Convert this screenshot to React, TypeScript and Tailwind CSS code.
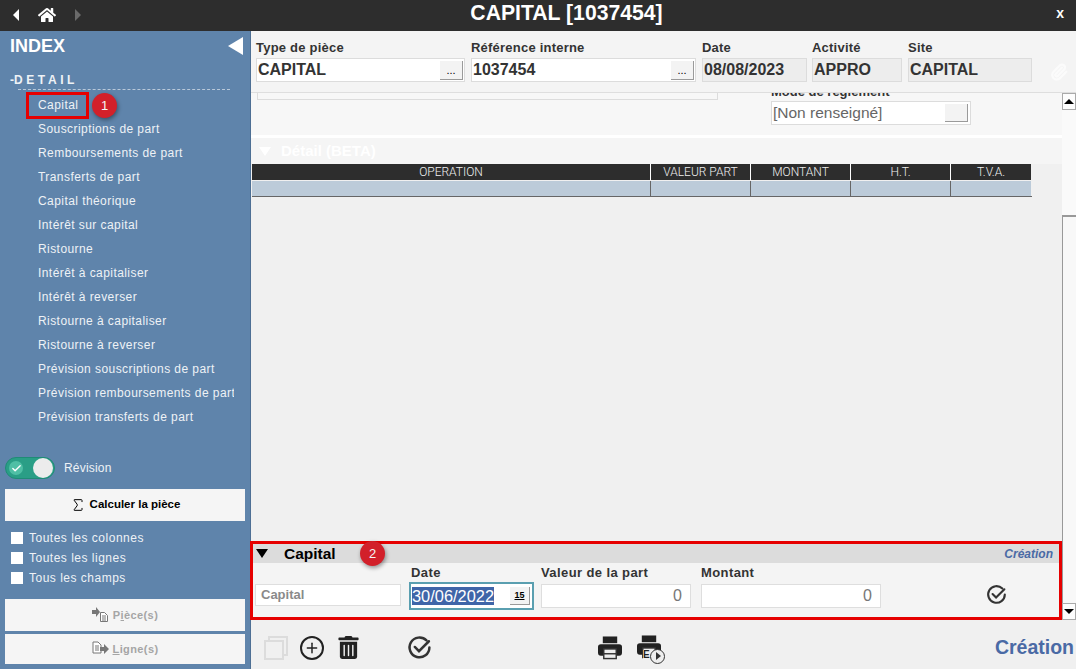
import React from "react";
import { FaHome, FaTrashAlt } from "react-icons/fa";
import { Check, Paperclip, Plus, Sigma } from "lucide-react";

const menu = [
  "Capital",
  "Souscriptions de part",
  "Remboursements de part",
  "Transferts de part",
  "Capital théorique",
  "Intérêt sur capital",
  "Ristourne",
  "Intérêt à capitaliser",
  "Intérêt à reverser",
  "Ristourne à capitaliser",
  "Ristourne à reverser",
  "Prévision souscriptions de part",
  "Prévision remboursements de part",
  "Prévision transferts de part",
];

function Badge({ n }: { n: string }) {
  return (
    <div className="absolute w-[25px] h-[25px] rounded-full bg-[#d2202a] text-[#f5f5f5] text-[13px] flex items-center justify-center shadow-[1px_2px_4px_rgba(0,0,0,0.4)]">
      {n}
    </div>
  );
}

function CheckCircle({ size, color }: { size: number; color: string }) {
  return (
    <svg width={size} height={size} viewBox="0 0 24 24" fill="none" stroke={color} strokeWidth="2.4" strokeLinecap="round">
      <path d="M18.700 5.200A9.500 9.500 0 1 0 21.500 12" />
      <path d="M7.500 11.500l4 4L21 6" />
    </svg>
  );
}

function Printer() {
  return (
    <svg width="24" height="24" viewBox="0 0 25 24">
      <rect x="5" y="0" width="15" height="7" fill="#222" />
      <path d="M3 8h19a3 3 0 0 1 3 3v6a3 3 0 0 1-3 3H3a3 3 0 0 1-3-3v-6a3 3 0 0 1 3-3z" fill="#222" />
      <rect x="6" y="13" width="13" height="10" fill="#eee" stroke="#333" strokeWidth="1.500" />
      <path d="M6 18h13" stroke="#333" strokeWidth="1.500" />
    </svg>
  );
}

function DotsButton() {
  return (
    <div className="w-[23px] h-[19px] bg-[#f3f3f3] border-r border-b border-[#9a9a9a] text-[11px] leading-[18px] text-center text-black">
      ...
    </div>
  );
}

function TopField({ label, value, w, readOnly }: { label: string; value: string; w: string; readOnly?: boolean }) {
  return (
    <div className={w}>
      <div className="text-[13px] leading-[15px] font-bold text-[#333] tracking-[0.22px] mb-[3px]">{label}</div>
      <div className={`h-[24px] border border-[#dcdcdc] flex items-center pl-[1px] pr-[1px] ${readOnly ? "bg-[#ededed]" : "bg-white"}`}>
        <span className="flex-1 text-[16px] font-bold text-[#333]">{value}</span>
        {!readOnly && <DotsButton />}
      </div>
    </div>
  );
}

function BottomLabel({ children }: { children: React.ReactNode }) {
  return <div className="text-[13px] leading-[15px] font-bold text-[#333] h-[16px] tracking-[0.4px]">{children}</div>;
}

const cols = [
  { t: "OPERATION", w: "w-[399px]" },
  { t: "VALEUR PART", w: "w-[100px]" },
  { t: "MONTANT", w: "w-[100px]" },
  { t: "H.T.", w: "w-[100px]" },
  { t: "T.V.A.", w: "w-[80px]" },
];

export default function App() {
  return (
    <div className="w-[1076px] h-[669px] flex flex-col overflow-hidden font-['Liberation_Sans',Arial,sans-serif] bg-[#f4f4f4]">
      {/* barre de titre */}
      <div className="h-[31px] shrink-0 bg-[#2d2d2d] flex items-center relative">
        <div className="flex items-center pl-[13px] gap-[18px] absolute left-0 pb-[2px]">
          <div className="w-0 h-0 border-y-[6px] border-y-transparent border-r-[6px] border-r-white" />
          <FaHome className="text-white ml-[1px]" size={18} />
          <div className="w-0 h-0 border-y-[6px] border-y-transparent border-l-[6px] border-l-[#6a6a6a] ml-[1px]" />
        </div>
        <div className="flex-1 text-center text-white font-bold text-[21.200px] pl-[57px] pb-[5px]">CAPITAL [1037454]</div>
        <div className="absolute right-[12px] top-[3px] text-white font-bold text-[14px]">x</div>
      </div>

      <div className="flex flex-1 min-h-0">
        {/* index */}
        <div className="w-[250px] shrink-0 bg-[#5f84ab] border-r border-[#4d6f94] box-content flex flex-col text-[#eef2f6]">
          <div className="flex items-center justify-between pl-[10px] pr-[7px] h-[30px]">
            <span className="text-[18px] font-bold text-white">INDEX</span>
            <div className="w-0 h-0 border-y-[9px] border-y-transparent border-r-[15px] border-r-white" />
          </div>
          <div className="pl-[10px] mt-[12px] text-[12px] leading-[14px] font-bold">
            -<span className="tracking-[3.6px]">DETAIL</span>
          </div>
          <div className="ml-[18px] mr-[20px] mt-[2px] border-t border-dashed border-[#b9c9da]" />
          <div className="flex flex-col pl-[38px] mt-[3px] w-[234px] overflow-hidden">
            {menu.map((m) => (
              <div key={m} className="h-[24px] leading-[24px] text-[12px] tracking-[0.43px] whitespace-nowrap">
                {m}
              </div>
            ))}
          </div>

          <div className="flex items-center mt-[28px] pl-[5px] h-[22px]">
            <div className="w-[50px] h-[22px] rounded-full bg-[#2a9e86] border border-[#1f8c76] flex items-center justify-between pl-[3px] pr-[1px]">
              <div className="w-[14px] h-[14px] rounded-full bg-[#4fbfa5] flex items-center justify-center">
                <Check size={11} color="white" strokeWidth={3} />
              </div>
              <div className="w-[20px] h-[20px] rounded-full bg-[#ececec]" />
            </div>
            <span className="text-[12px] ml-[9px] tracking-[0.2px]">Révision</span>
          </div>
          <div className="mx-[5px] mt-[10px] h-[32px] bg-[#f5f5f5] flex items-center justify-center gap-[4px] text-[11.500px] font-bold text-black">
            <Sigma size={16} strokeWidth={1.500} />
            <span>Calculer la pièce</span>
          </div>
          <div className="mt-[7px] pl-[11px] flex flex-col">
            {["Toutes les colonnes", "Toutes les lignes", "Tous les champs"].map((c) => (
              <div key={c} className="h-[20px] flex items-center gap-[6px] text-[12px] tracking-[0.5px]">
                <span className="w-[12px] h-[12px] bg-white" />
                {c}
              </div>
            ))}
          </div>
          <div className="mx-[5px] mt-[11px] h-[32px] bg-[#f5f5f5] flex items-center justify-center gap-[4px] text-[11px] font-bold text-[#a5a5a5] tracking-[0.4px]">
            <svg width="17" height="16" viewBox="0 0 17 16">
              <path d="M0 3h4V0l4 5-4 5V7H0z" fill="#777" />
              <path d="M8.500 5.500h4l3 3v6h-7z" fill="#fff" stroke="#777" />
              <path d="M10 9h4M10 11h4M10 13h4" stroke="#777" />
            </svg>
            <span>
              P<u>i</u>èce(s)
            </span>
          </div>
          <div className="mx-[5px] mt-[3px] h-[30px] bg-[#f5f5f5] flex items-center justify-center gap-[4px] text-[11px] font-bold text-[#a5a5a5] tracking-[0.4px]">
            <svg width="17" height="16" viewBox="0 0 17 16">
              <path d="M1 1h5l3 3v8H1z" fill="#fff" stroke="#777" />
              <path d="M3 5h4M3 7h4M3 9h4" stroke="#777" />
              <path d="M8 6h4V3l5 5-5 5v-3H8z" fill="#777" />
            </svg>
            <span>
              <u>L</u>igne(s)
            </span>
          </div>
        </div>

        {/* contenu */}
        <div className="flex-1 min-w-0 flex flex-col">
          <div className="h-[62px] shrink-0 flex pl-[5px] pt-[9px] gap-[6px] bg-[#f4f4f4] border-b border-[#dedede]">
            <TopField label="Type de pièce" value="CAPITAL" w="w-[209px]" />
            <TopField label="Référence interne" value="1037454" w="w-[225px]" />
            <TopField label="Date" value="08/08/2023" w="w-[105px]" readOnly />
            <TopField label="Activité" value="APPRO" w="w-[90px] ml-[-1px]" readOnly />
            <TopField label="Site" value="CAPITAL" w="w-[124px]" readOnly />
            <Paperclip className="ml-[12px] mt-[23px]" size={18} color="#fbfbfb" strokeWidth={3} />
          </div>

          <div className="flex flex-1 min-h-0">
            <div className="w-[811px] shrink-0 flex flex-col">
              <div className="flex-1 min-h-0 bg-[#f0f0f0] overflow-hidden flex flex-col">
                <div className="h-[42px] shrink-0 bg-[#f7f7f7] relative flex">
                  <div className="w-[461px] h-[7px] ml-[6px] border border-t-0 border-[#dcdcdc]" />
                  <div className="ml-[53px]">
                    <div className="h-[8px] overflow-hidden">
                      <div className="text-[13px] font-bold leading-[15px] text-[#333] -mt-[9px]">Mode de règlement</div>
                    </div>
                    <div className="w-[200px] h-[24px] bg-white border border-[#dcdcdc] flex items-center text-[15.500px] text-[#666] pl-[1px] pr-[2px] justify-between">
                      <span>[Non renseigné]</span>
                      <span className="w-[23px] h-[18px] bg-[#f3f3f3] border-r border-b border-[#9a9a9a]" />
                    </div>
                  </div>
                </div>
                <div className="h-[3px] shrink-0 bg-white" />
                <div className="h-[26px] shrink-0 bg-[#f5f5f5] flex items-center pl-[8px] pt-[1px] text-white font-bold text-[15px]">
                  <span className="w-0 h-0 mr-[10px] border-x-[6px] border-x-transparent border-t-[9px] border-t-white" />
                  <span>Détail (BETA)</span>
                </div>
                <div className="ml-[1px] w-[780px] shrink-0">
                  <div className="flex h-[16px]">
                    {cols.map((c) => (
                      <div key={c.t} className={`${c.w} bg-[#2d2d2d] border-r border-white last:border-r-0 text-[#f0f0f0] text-[12px] font-['Roboto',sans-serif] font-light text-center leading-[16px]`}>
                        {c.t}
                      </div>
                    ))}
                  </div>
                  <div className="flex h-[17px] border-b border-[#666] border-t border-t-[#f0f0f0]">
                    {cols.map((c) => (
                      <div key={c.t} className={`${c.w} bg-[#bccbd9] border-r border-[#666] last:border-r-0`} />
                    ))}
                  </div>
                </div>
              </div>

              {/* saisie */}
              <div className="h-[79px] w-[812px] -ml-[1px] shrink-0 border-[3px] border-[#e60000] bg-[#f4f4f4] flex flex-col">
                <div className="h-[19px] bg-[#dcdcdc] flex items-center pl-[3px]">
                  <span className="w-0 h-0 mr-[16px] border-x-[6px] border-x-transparent border-t-[9px] border-t-black" />
                  <span className="text-[15.500px] font-bold text-black">Capital</span>
                  <span className="ml-auto mr-[6px] text-[12px] font-bold italic text-[#4a6aa5]">Création</span>
                </div>
                <div className="flex pl-[2px] pt-[2px]">
                  <div className="w-[146px] pt-[19px]">
                    <div className="h-[22px] bg-white border border-[#dedede] text-[13px] font-bold text-[#8a8a8a] pl-[5px] leading-[20px]">Capital</div>
                  </div>
                  <div className="w-[125px] ml-[8px]">
                    <div className="pl-[2px]">
                      <BottomLabel>Date</BottomLabel>
                    </div>
                    <div className="h-[28px] w-[125px] mt-[1px] border-[2px] border-[#5a9fb0] bg-white flex items-center pl-[1px] pr-[2px]">
                      <span className="bg-[#3f65a8] text-white text-[16.400px] leading-[18px]">30/06/2022</span>
                      <span className="ml-auto w-[20px] h-[18px] bg-[#f3f3f3] border-r border-b border-[#9a9a9a] text-[9px] font-bold underline text-black text-center leading-[16px]">15</span>
                    </div>
                  </div>
                  <div className="w-[150px] ml-[7px]">
                    <BottomLabel>Valeur de la part</BottomLabel>
                    <div className="mt-[3px] h-[24px] w-[150px] bg-white border border-[#dedede] text-right pr-[8px] text-[16px] text-[#777] leading-[22px]">0</div>
                  </div>
                  <div className="w-[180px] ml-[10px]">
                    <BottomLabel>Montant</BottomLabel>
                    <div className="mt-[3px] h-[24px] w-[180px] bg-white border border-[#dedede] text-right pr-[8px] text-[16px] text-[#777] leading-[22px]">0</div>
                  </div>
                  <div className="ml-[105px] pt-[19px]">
                    <CheckCircle size={21} color="#333" />
                  </div>
                </div>
              </div>
            </div>

            {/* ascenseur */}
            <div className="flex-1 bg-[#fafafa] flex flex-col">
              <div className="h-[17px] border border-[#aaa] bg-[#fdfdfd] flex items-center justify-center">
                <span className="w-0 h-0 border-x-[5px] border-x-transparent border-b-[5px] border-b-black" />
              </div>
              <div className="h-[105px]" />
              <div className="flex-1 border-l border-t-2 border-[#999] bg-[#f8f8f8]" />
              <div className="h-[17px] border border-[#aaa] bg-[#fdfdfd] flex items-center justify-center">
                <span className="w-0 h-0 border-x-[5px] border-x-transparent border-t-[5px] border-t-black" />
              </div>
            </div>
          </div>

          {/* barre d'outils */}
          <div className="h-[49px] shrink-0 bg-[#f0f0f0] flex items-center pl-[13px] pt-[6px]">
            <svg width="24" height="24" viewBox="0 0 24 24" fill="none" stroke="#dcdcdc" strokeWidth="2">
              <rect x="1" y="5" width="18" height="18" />
              <path d="M5 5V1h18v18h-4" />
            </svg>
            <div className="ml-[12px] w-[24px] h-[24px] rounded-full border-[2px] border-[#222] flex items-center justify-center">
              <Plus size={16} strokeWidth={2.2} color="#222" />
            </div>
            <FaTrashAlt className="ml-[13px]" size={23} color="#222" />
            <div className="ml-[47px]">
              <CheckCircle size={25} color="#333" />
            </div>
            <div className="ml-[166px]">
              <Printer />
            </div>
            <div className="ml-[15px] relative w-[26px] h-[26px]">
              <Printer />
              <span className="absolute left-[6px] bottom-[1px] w-[10px] bg-[#f0f0f0] text-[10px] leading-[10px] font-bold text-[#222]">E</span>
              <div className="absolute right-[-2px] bottom-[-3px] w-[15px] h-[15px] rounded-full bg-[#eee] border border-[#333] flex items-center justify-center">
                <div className="w-0 h-0 ml-[1px] border-y-[4px] border-y-transparent border-l-[5px] border-l-[#333]" />
              </div>
            </div>
            <div className="ml-auto pr-[2px] text-[19.500px] font-bold text-[#4a6aa5]">Création</div>
          </div>
        </div>
      </div>

      {/* repères */}
      <div className="absolute left-[26px] top-[92px] w-[63px] h-[27px] border-[3px] border-[#e60000]" />
      <div className="absolute left-[92px] top-[93px]">
        <Badge n="1" />
      </div>
      <div className="absolute left-[360px] top-[541px]">
        <Badge n="2" />
      </div>
    </div>
  );
}
